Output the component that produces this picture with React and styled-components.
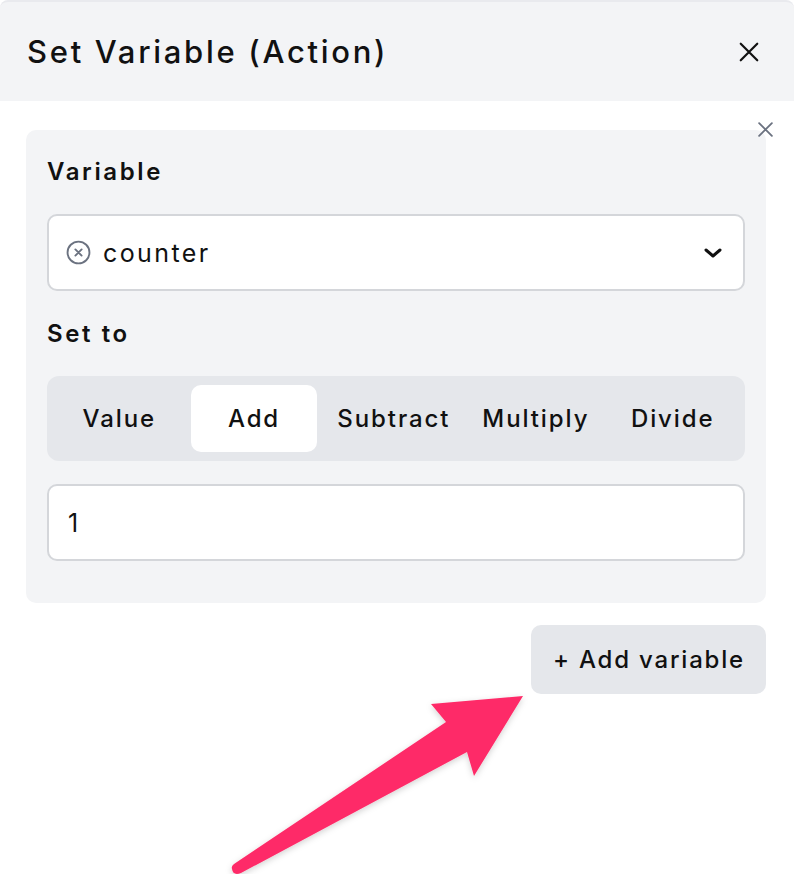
import React, { useState } from 'react';
import styled, { createGlobalStyle } from 'styled-components';

const GlobalStyle = createGlobalStyle`
    html, body {
        margin: 0;
        padding: 0;
        background: #ffffff;
    }
    body {
        font-family: "Inter", "Noto Sans", sans-serif;
        color: #111111;
    }
`;

const Page = styled.div`
    width: 794px;
    height: 874px;
    position: relative;
    overflow: hidden;
    background: #ffffff;
`;

const Header = styled.div`
    height: 99px;
    display: flex;
    align-items: center;
    justify-content: space-between;
    padding: 0 34px 0 27px;
    background: #f3f4f6;
    border-top: 2px solid #e9eaee;
    border-radius: 8px 8px 0 0;
`;

const Title = styled.h1`
    margin: 0;
    font-size: 31px;
    font-weight: 500;
    letter-spacing: 2.7px;
    color: #111111;
`;

const IconButton = styled.button`
    border: none;
    background: none;
    padding: 0;
    display: flex;
    align-items: center;
    justify-content: center;
    cursor: pointer;
    color: ${(p) => p.$color || '#111111'};
`;

const Body = styled.div`
    padding: 29px 28px 0 26px;
    display: flex;
    flex-direction: column;
    align-items: stretch;
`;

const Card = styled.div`
    position: relative;
    background: #f3f4f6;
    border-radius: 10px;
    padding: 23px 21px 42px 21px;
    display: flex;
    flex-direction: column;
`;

const CardClose = styled(IconButton)`
    position: absolute;
    top: -9px;
    right: -8px;
`;

const Label = styled.div`
    font-size: 24px;
    font-weight: 600;
    line-height: 38px;
    letter-spacing: 2.6px;
    margin-bottom: ${(p) => p.$gap || 23}px;
`;

const Field = styled.div`
    height: 73px;
    background: #ffffff;
    border: 2px solid #d4d6da;
    border-radius: 10px;
    display: flex;
    align-items: center;
    padding: 0 20px 0 17px;
    margin-bottom: ${(p) => p.$gap || 0}px;
    font-size: 25px;
    font-weight: 400;
`;

const Chip = styled.div`
    display: flex;
    align-items: center;
    gap: 12px;
    flex: 1;
    color: #111111;
    letter-spacing: 2.4px;
`;

const Tabs = styled.div`
    display: flex;
    gap: 8px;
    padding: 9px;
    background: #e5e7eb;
    border-radius: 12px;
    margin-bottom: 23px;
`;

const Tab = styled.button`
    flex: 1 1 0;
    height: 67px;
    padding: 0 12px;
    border: none;
    border-radius: 10px;
    background: ${(p) => (p.$active ? '#ffffff' : 'transparent')};
    font-family: inherit;
    font-size: 24px;
    font-weight: 500;
    letter-spacing: 1.9px;
    color: #111111;
    white-space: nowrap;
    cursor: pointer;
`;

const InputText = styled.span`
    padding-left: 2px;
`;

const Footer = styled.div`
    display: flex;
    justify-content: flex-end;
    margin-top: 22px;
`;

const AddButton = styled.button`
    height: 69px;
    padding: 0 21px 0 22px;
    border: none;
    border-radius: 10px;
    background: #e5e7eb;
    font-family: inherit;
    font-size: 24px;
    font-weight: 500;
    letter-spacing: 1.8px;
    color: #111111;
    cursor: pointer;
`;

const Arrow = styled.svg`
    position: absolute;
    left: 0;
    top: 0;
    pointer-events: none;
`;

const CloseIcon = ({ size = 22, stroke = 2.4 }) => (
    <svg width={size} height={size} viewBox="0 0 24 24" fill="none" stroke="currentColor" strokeWidth={stroke} strokeLinecap="round">
        <path d="M3 3 L21 21 M21 3 L3 21" />
    </svg>
);

const ClearIcon = () => (
    <svg width="25" height="25" viewBox="0 0 24 24" fill="none" stroke="#6b7280" strokeWidth="1.8" strokeLinecap="round">
        <circle cx="12" cy="12" r="10.5" />
        <path d="M9 9 L15 15 M15 9 L9 15" />
    </svg>
);

const Chevron = () => (
    <svg width="20" height="12" viewBox="0 0 20 12" fill="none" stroke="#111111" strokeWidth="3" strokeLinecap="round" strokeLinejoin="round">
        <path d="M3 3 L10 9 L17 3" />
    </svg>
);

const modes = ['Value', 'Add', 'Subtract', 'Multiply', 'Divide'];

export default function App() {
    const [mode, setMode] = useState('Add');

    return (
        <Page>
            <GlobalStyle />
            <Header>
                <Title>Set Variable (Action)</Title>
                <IconButton aria-label="Close">
                    <CloseIcon size={22} stroke={2.4} />
                </IconButton>
            </Header>
            <Body>
                <Card>
                    <CardClose $color="#6b7280" aria-label="Remove">
                        <CloseIcon size={17} stroke={2.6} />
                    </CardClose>
                    <Label>Variable</Label>
                    <Field $gap={24}>
                        <Chip>
                            <ClearIcon />
                            counter
                        </Chip>
                        <Chevron />
                    </Field>
                    <Label $gap={23}>Set to</Label>
                    <Tabs>
                        {modes.map((m) => (
                            <Tab key={m} $active={m === mode} onClick={() => setMode(m)}>
                                {m}
                            </Tab>
                        ))}
                    </Tabs>
                    <Field>
                        <InputText>1</InputText>
                    </Field>
                </Card>
                <Footer>
                    <AddButton>+ Add variable</AddButton>
                </Footer>
            </Body>
            <Arrow width="794" height="874" viewBox="0 0 794 874">
                <defs>
                    <filter id="arrowShadow" x="-10%" y="-10%" width="120%" height="120%">
                        <feDropShadow dx="0" dy="2" stdDeviation="3" floodColor="#000000" floodOpacity="0.18" />
                    </filter>
                </defs>
                <path
                    d="M234 864 L446 722 L431 704 L523 696 L474 776 L467 752 L241 873 Q233 876 232 869 Q231 866 234 864 Z"
                    fill="#fe2c68"
                    filter="url(#arrowShadow)"
                />
            </Arrow>
        </Page>
    );
}
